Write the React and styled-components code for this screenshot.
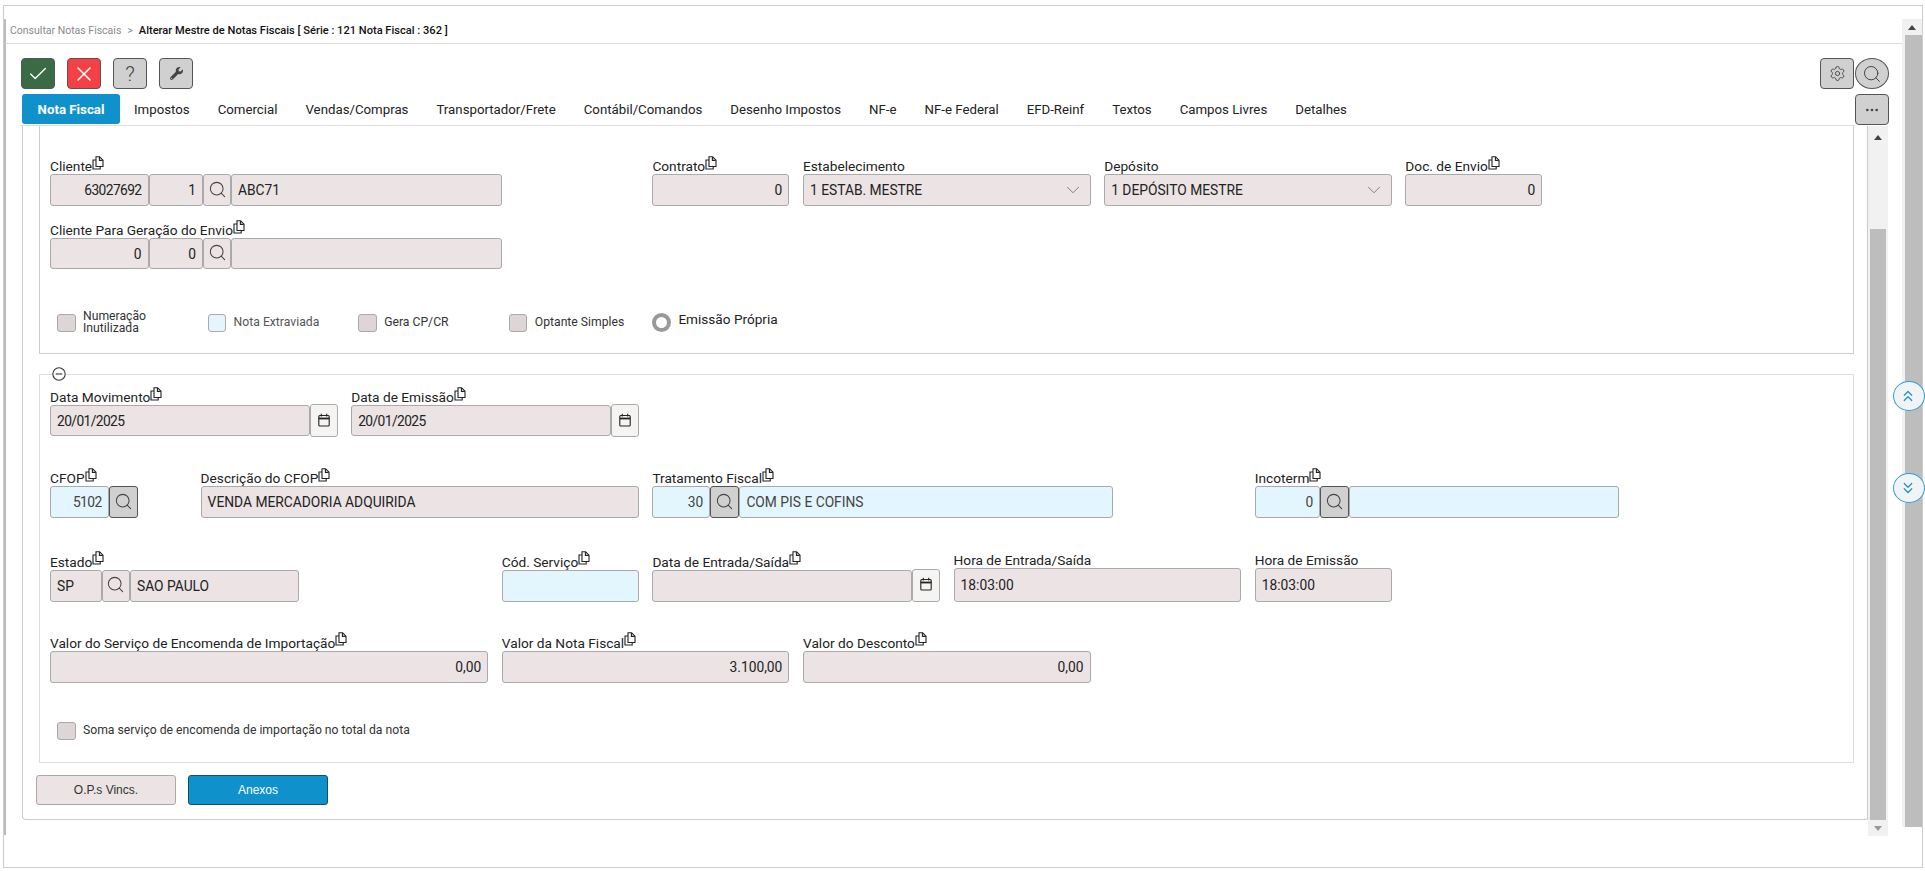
import React from "react";
import styled, { createGlobalStyle } from "styled-components";
import {
  Check,
  X,
  Search,
  Settings,
  ChevronDown,
  ChevronsUp,
  ChevronsDown,
  Ellipsis,
} from "lucide-react";
import { FaWrench } from "react-icons/fa";

const GlobalStyle = createGlobalStyle`
  html, body {
    margin: 0;
    padding: 0;
    background: #fff;
  }
  * {
    box-sizing: border-box;
  }
`;

const FONT = `Roboto, "Noto Sans", sans-serif`;

const Page = styled.div`
  width: 1925px;
  height: 871px;
  padding: 5px 2px 3px 3px;
  font-family: ${FONT};
  color: #222;
  overflow: hidden;
`;

const Frame = styled.div`
  height: 100%;
  border: 1px solid #ccc;
  display: flex;
  position: relative;
`;

const Main = styled.div`
  flex: 1;
  min-width: 0;
  height: 816px;
  margin-top: 13px;
  border-left: 2px solid #bbb;
`;

const Crumbs = styled.div`
  height: 25px;
  padding: 0 0 2px 5px;
  border-bottom: 1px solid #ddd;
  display: flex;
  align-items: center;
  font-size: 10.5px;
  margin-left: -1px;
`;

const CrumbLink = styled.span`
  color: #8a8a8a;
`;

const CrumbSep = styled.span`
  color: #8a8a8a;
  margin: 0 6px;
`;

const CrumbCurrent = styled.span`
  color: #111;
  font-size: 11.1px;
  font-weight: 500;
`;

const Toolbar = styled.div`
  display: flex;
  justify-content: space-between;
  padding: 14px 13px 0 15px;
`;

const ToolGroup = styled.div`
  display: flex;
  gap: ${(p) => p.$gap || 0}px;
`;

const ToolButton = styled.button`
  width: 34px;
  height: 31px;
  padding: 0;
  border: 1px solid #555;
  border-radius: ${(p) => (p.$round ? "50%" : "4px")};
  background: ${(p) => p.$bg || "#d0d0d0"};
  color: ${(p) => p.$fg || "#444"};
  display: flex;
  align-items: center;
  justify-content: center;
  font-family: ${FONT};
  font-size: 21px;
  font-weight: 300;
`;

const TabRow = styled.div`
  display: flex;
  margin: 5px 13px 0 14px;
  height: 32px;
`;

const Tabs = styled.div`
  flex: 1;
  display: flex;
  align-items: flex-start;
  border-bottom: 1px solid #ddd;
  padding-left: 2px;
`;

const Tab = styled.div`
  height: 30px;
  padding: 1px 14px 0;
  display: flex;
  align-items: center;
  font-size: 13.25px;
  color: #222;
  white-space: nowrap;
  border-radius: ${(p) => (p.$active ? "3px" : "0")};
  background: ${(p) => (p.$active ? "#0f92cc" : "transparent")};
  ${(p) => p.$active && "color: #fff; font-weight: 700; width: 98px; justify-content: center; padding: 1px 0 0;"}
`;

const Body = styled.div`
  display: flex;
  padding-left: 16px;
  padding-right: 14px;
`;

const Panel = styled.div`
  flex: 1;
  min-width: 0;
  height: 694px;
  padding: 0 13px 0 16px;
  border: 1px solid #ccc;
  border-top: 0;
  border-radius: 0 0 0 4px;
`;

const Scrollbar = styled.div`
  flex-shrink: 0;
  width: 20px;
  height: ${(p) => p.$height}px;
  margin-top: ${(p) => p.$top}px;
  background: #f1f1f1;
  display: flex;
  flex-direction: column;
`;

const ScrollArrow = styled.div`
  height: ${(p) => p.$size}px;
  display: flex;
  align-items: center;
  justify-content: center;
  &::before {
    content: "";
    border-left: 4px solid transparent;
    border-right: 4px solid transparent;
    ${(p) => (p.$down ? "border-top: 5px solid #999;" : "border-bottom: 5px solid #444;")}
  }
`;

const ScrollTrack = styled.div`
  flex: 1;
  padding-top: ${(p) => p.$offset}px;
  padding-left: ${(p) => p.$left}px;
  padding-right: ${(p) => p.$right}px;
  display: flex;
`;

const ScrollThumb = styled.div`
  flex: 1;
  background: #bdbdbd;
`;

const TopSection = styled.div`
  height: 228px;
  padding: 32px 10px 0;
  border: 1px solid #ccc;
  border-top: 0;
`;

const FieldSet = styled.fieldset`
  margin: 13px 0 0;
  min-width: 0;
  padding: 0 10px 22px;
  border: 1px solid #ddd;
`;

const Legend = styled.legend`
  margin-left: 2px;
  padding: 0;
  height: 14px;
  display: flex;
`;

const Grid = styled.div`
  display: grid;
  grid-template-columns: repeat(12, 137px);
  column-gap: 13.6px;
  align-items: end;
  margin-top: ${(p) => p.$top || 0}px;
`;

const Field = styled.div`
  grid-column: ${(p) => p.$col} / span ${(p) => p.$span || 1};
  width: ${(p) => (p.$w ? `${p.$w}px` : "auto")};
`;

const LabelRow = styled.div`
  height: 16px;
  display: flex;
  align-items: center;
  font-size: 13.7px;
  color: #222;
  white-space: nowrap;
`;

const CopyMark = styled.svg`
  width: 12px;
  height: 14px;
  margin: -7px 0 0 0;
  flex-shrink: 0;
`;

const InputGroup = styled.div`
  display: flex;
`;

const Input = styled.div`
  flex: ${(p) => (p.$w ? `0 0 ${p.$w}px` : "1")};
  min-width: 0;
  height: ${(p) => p.$h || 32}px;
  padding: 0 6px;
  border: 1px solid #aaa;
  border-bottom-width: 1.5px;
  border-radius: 3px;
  background: ${(p) => (p.$blue ? "#e3f5fd" : "#ebe3e4")};
  color: ${(p) => (p.$blue ? "#444" : "#222")};
  display: flex;
  align-items: center;
  justify-content: ${(p) => (p.$right ? "flex-end" : "space-between")};
  font-size: 13.8px;
  letter-spacing: ${(p) => (p.$tight ? "-0.6px" : "0")};
  white-space: nowrap;
`;

const LookupButton = styled.div`
  flex: 0 0 ${(p) => p.$w || 29}px;
  height: ${(p) => p.$h || 32}px;
  padding-bottom: 2px;
  border: 1px solid ${(p) => (p.$strong ? "#555" : "#aaa")};
  border-radius: 3px;
  background: ${(p) => (p.$strong ? "#d0d0d0" : p.$white ? "#fff" : "#ebe3e4")};
  color: #444;
  display: flex;
  align-items: center;
  justify-content: center;
`;

const CalendarButton = styled(LookupButton)`
  flex-basis: 28px;
  height: 33px;
  margin-top: -1px;
  background: #f6f3f3;
`;

const ChecksRow = styled(Grid)`
  align-items: start;
  margin-top: 42px;
`;

const CheckItem = styled.div`
  grid-column: ${(p) => p.$col} / span ${(p) => p.$span || 1};
  display: flex;
  align-items: center;
  gap: 7.5px;
  margin-top: ${(p) => p.$top || 0}px;
  margin-left: 7px;
`;

const Box = styled.div`
  flex-shrink: 0;
  width: 18.5px;
  height: 18px;
  border: 1px solid #aaa;
  border-radius: 3px;
  background: ${(p) => (p.$blue ? "#e3f5fd" : "#ddd5d6")};
`;

const CheckText = styled.div`
  font-size: 12.2px;
  line-height: 11.6px;
  color: ${(p) => (p.$muted ? "#555" : "#333")};
  white-space: nowrap;
`;

const RadioItem = styled.div`
  grid-column: 5 / span 2;
  display: flex;
  align-items: flex-start;
  gap: 7px;
  margin-top: 1.5px;
`;

const RadioRing = styled.div`
  width: 19px;
  height: 19px;
  border: 4px solid #999;
  border-radius: 50%;
`;

const RadioText = styled.div`
  margin-top: -1.5px;
  font-size: 13.6px;
  line-height: 16px;
  color: #222;
`;

const Actions = styled.div`
  display: flex;
  gap: 12px;
  margin: 12px 0 0 -3px;
`;

const ActionButton = styled.button`
  width: 140px;
  height: 30px;
  padding: 0;
  border: 1px solid ${(p) => (p.$primary ? "#124e6e" : "#aaa")};
  border-radius: 3px;
  background: ${(p) => (p.$primary ? "#0f92cc" : "#ebe3e4")};
  color: ${(p) => (p.$primary ? "#fff" : "#333")};
  font-family: "Liberation Sans", Arial, sans-serif;
  font-size: 12px;
`;

const FloatButton = styled.div`
  position: absolute;
  left: ${(p) => p.$left}px;
  top: ${(p) => p.$top}px;
  width: 32px;
  height: 30px;
  border: 1px solid #2a9fd6;
  border-radius: 50%;
  background: #f0f4f6;
  color: #1f8fc4;
  display: flex;
  align-items: center;
  justify-content: center;
  padding-right: 3px;
`;

const CopyIcon = () => (
  <CopyMark viewBox="0 0 12 14" fill="none" stroke="#222" strokeWidth="1.1">
    <path d="M4 .8h3.6l3.4 3.4v6.3h-7z" />
    <path d="M7.4 1v3.4h3.4" />
    <path d="M4 4H1v9h7.2v-2.5" />
  </CopyMark>
);

const CalendarIcon = () => (
  <svg width="12" height="14" viewBox="0 0 12 14" fill="none" stroke="#222" strokeWidth="1.1">
    <rect x="0.8" y="2.5" width="10.4" height="10.5" rx="1" />
    <path d="M0.8 5.5h10.4" strokeWidth="1.8" />
    <path d="M3.3 0.8v2.6M8.7 0.8v2.6" />
  </svg>
);

const Label = ({ children, copy = true }) => (
  <LabelRow>
    {children}
    {copy && <CopyIcon />}
  </LabelRow>
);

const Lookup = (props) => (
  <LookupButton {...props}>
    <Search size={19} strokeWidth={1.3} />
  </LookupButton>
);

const Select = ({ children }) => (
  <Input>
    {children}
    <ChevronDown size={22} strokeWidth={1} color="#777" />
  </Input>
);

const DateField = ({ label, col, value }) => (
  <Field $col={col} $span={2}>
    <Label>{label}</Label>
    <InputGroup>
      <Input $h={31} $tight>{value}</Input>
      <CalendarButton $white>
        <CalendarIcon />
      </CalendarButton>
    </InputGroup>
  </Field>
);

const tabs = [
  "Impostos",
  "Comercial",
  "Vendas/Compras",
  "Transportador/Frete",
  "Contábil/Comandos",
  "Desenho Impostos",
  "NF-e",
  "NF-e Federal",
  "EFD-Reinf",
  "Textos",
  "Campos Livres",
  "Detalhes",
];

export default function App() {
  return (
    <Page>
      <GlobalStyle />
      <Frame>
        <Main>
          <Crumbs>
            <CrumbLink>Consultar Notas Fiscais</CrumbLink>
            <CrumbSep>&gt;</CrumbSep>
            <CrumbCurrent>
              Alterar Mestre de Notas Fiscais [ Série : 121 Nota Fiscal : 362 ]
            </CrumbCurrent>
          </Crumbs>

          <Toolbar>
            <ToolGroup $gap={12}>
              <ToolButton $bg="#3a6b45" $fg="#fff">
                <Check size={22} strokeWidth={1.5} />
              </ToolButton>
              <ToolButton $bg="#f54045" $fg="#fff">
                <X size={24} strokeWidth={1.6} />
              </ToolButton>
              <ToolButton>?</ToolButton>
              <ToolButton>
                <FaWrench size={13} />
              </ToolButton>
            </ToolGroup>
            <ToolGroup $gap={1}>
              <ToolButton>
                <Settings size={17} strokeWidth={1.3} />
              </ToolButton>
              <ToolButton $round>
                <Search size={20} strokeWidth={1.2} />
              </ToolButton>
            </ToolGroup>
          </Toolbar>

          <TabRow>
            <Tabs>
              <Tab $active>Nota Fiscal</Tab>
              {tabs.map((t) => (
                <Tab key={t}>{t}</Tab>
              ))}
            </Tabs>
            <ToolButton>
              <Ellipsis size={16} />
            </ToolButton>
          </TabRow>

          <Body>
            <Panel>
              <TopSection>
                <Grid>
                  <Field $col={1} $span={3} $w={451.6}>
                    <Label>Cliente</Label>
                    <InputGroup>
                      <Input $w={98.5} $right $tight>63027692</Input>
                      <Input $w={54.5} $right>1</Input>
                      <Lookup $w={28} />
                      <Input>ABC71</Input>
                    </InputGroup>
                  </Field>
                  <Field $col={5}>
                    <Label>Contrato</Label>
                    <Input $right>0</Input>
                  </Field>
                  <Field $col={6} $span={2}>
                    <Label copy={false}>Estabelecimento</Label>
                    <Select>1 ESTAB. MESTRE</Select>
                  </Field>
                  <Field $col={8} $span={2}>
                    <Label copy={false}>Depósito</Label>
                    <Select>1 DEPÓSITO MESTRE</Select>
                  </Field>
                  <Field $col={10}>
                    <Label>Doc. de Envio</Label>
                    <Input $right>0</Input>
                  </Field>
                </Grid>

                <Grid $top={16}>
                  <Field $col={1} $span={3} $w={451.6}>
                    <Label>Cliente Para Geração do Envio</Label>
                    <InputGroup>
                      <Input $w={98.5} $h={31} $right>0</Input>
                      <Input $w={54.5} $h={31} $right>0</Input>
                      <Lookup $w={28} $h={31} />
                      <Input $h={31} />
                    </InputGroup>
                  </Field>
                </Grid>

                <ChecksRow>
                  <CheckItem $col={1}>
                    <Box />
                    <CheckText>Numeração<br />Inutilizada</CheckText>
                  </CheckItem>
                  <CheckItem $col={2} $top={3}>
                    <Box $blue />
                    <CheckText $muted>Nota Extraviada</CheckText>
                  </CheckItem>
                  <CheckItem $col={3} $top={3}>
                    <Box />
                    <CheckText>Gera CP/CR</CheckText>
                  </CheckItem>
                  <CheckItem $col={4} $top={3}>
                    <Box />
                    <CheckText>Optante Simples</CheckText>
                  </CheckItem>
                  <RadioItem>
                    <RadioRing />
                    <RadioText>Emissão Própria</RadioText>
                  </RadioItem>
                </ChecksRow>
              </TopSection>

              <FieldSet>
                <Legend>
                  <svg width="14" height="14" viewBox="0 0 14 14" fill="#fff" stroke="#333" strokeWidth="1.1">
                    <circle cx="7" cy="7" r="6.2" />
                    <path d="M3.8 7h6.4" />
                  </svg>
                </Legend>

                <Grid $top={8}>
                  <DateField label="Data Movimento" col={1} value="20/01/2025" />
                  <DateField label="Data de Emissão" col={3} value="20/01/2025" />
                </Grid>

                <Grid $top={33}>
                  <Field $col={1} $w={87.6}>
                    <Label>CFOP</Label>
                    <InputGroup>
                      <Input $blue $right $tight>5102</Input>
                      <Lookup $strong />
                    </InputGroup>
                  </Field>
                  <Field $col={2} $span={3}>
                    <Label>Descrição do CFOP</Label>
                    <Input>VENDA MERCADORIA ADQUIRIDA</Input>
                  </Field>
                  <Field $col={5} $span={3} $w={460.5}>
                    <Label>Tratamento Fiscal</Label>
                    <InputGroup>
                      <Input $blue $right $w={58}>30</Input>
                      <Lookup $strong />
                      <Input $blue>COM PIS E COFINS</Input>
                    </InputGroup>
                  </Field>
                  <Field $col={9} $span={3} $w={364}>
                    <Label>Incoterm</Label>
                    <InputGroup>
                      <Input $blue $right $w={65.5}>0</Input>
                      <Lookup $strong />
                      <Input $blue />
                    </InputGroup>
                  </Field>
                </Grid>

                <Grid $top={33.5}>
                  <Field $col={1} $span={2} $w={249}>
                    <Label>Estado</Label>
                    <InputGroup>
                      <Input $w={51.6}>SP</Input>
                      <Lookup $w={28.4} />
                      <Input>SAO PAULO</Input>
                    </InputGroup>
                  </Field>
                  <Field $col={4}>
                    <Label>Cód. Serviço</Label>
                    <Input $blue />
                  </Field>
                  <Field $col={5} $span={2}>
                    <Label>Data de Entrada/Saída</Label>
                    <InputGroup>
                      <Input />
                      <CalendarButton $white>
                        <CalendarIcon />
                      </CalendarButton>
                    </InputGroup>
                  </Field>
                  <Field $col={7} $span={2}>
                    <Label copy={false}>Hora de Entrada/Saída</Label>
                    <Input $h={34}>18:03:00</Input>
                  </Field>
                  <Field $col={9}>
                    <Label copy={false}>Hora de Emissão</Label>
                    <Input $h={34}>18:03:00</Input>
                  </Field>
                </Grid>

                <Grid $top={33}>
                  <Field $col={1} $span={3}>
                    <Label>Valor do Serviço de Encomenda de Importação</Label>
                    <Input $right>0,00</Input>
                  </Field>
                  <Field $col={4} $span={2}>
                    <Label>Valor da Nota Fiscal</Label>
                    <Input $right>3.100,00</Input>
                  </Field>
                  <Field $col={6} $span={2}>
                    <Label>Valor do Desconto</Label>
                    <Input $right>0,00</Input>
                  </Field>
                </Grid>

                <Grid $top={39}>
                  <CheckItem $col={1} $span={4}>
                    <Box />
                    <CheckText>Soma serviço de encomenda de importação no total da nota</CheckText>
                  </CheckItem>
                </Grid>
              </FieldSet>

              <Actions>
                <ActionButton>O.P.s Vincs.</ActionButton>
                <ActionButton $primary>Anexos</ActionButton>
              </Actions>
            </Panel>

            <Scrollbar $height={710}>
              <ScrollArrow $size={22} />
              <ScrollTrack $offset={81} $left={2} $right={2}>
                <ScrollThumb />
              </ScrollTrack>
              <ScrollArrow $size={16} $down />
            </Scrollbar>
          </Body>
        </Main>

        <Scrollbar $height={808} $top={13}>
          <ScrollArrow $size={16} />
          <ScrollTrack $offset={0} $left={3} $right={0}>
            <ScrollThumb />
          </ScrollTrack>
        </Scrollbar>

        <FloatButton $left={1889} $top={375}>
          <ChevronsUp size={18} strokeWidth={1.6} />
        </FloatButton>
        <FloatButton $left={1889} $top={467}>
          <ChevronsDown size={18} strokeWidth={1.6} />
        </FloatButton>
      </Frame>
    </Page>
  );
}
